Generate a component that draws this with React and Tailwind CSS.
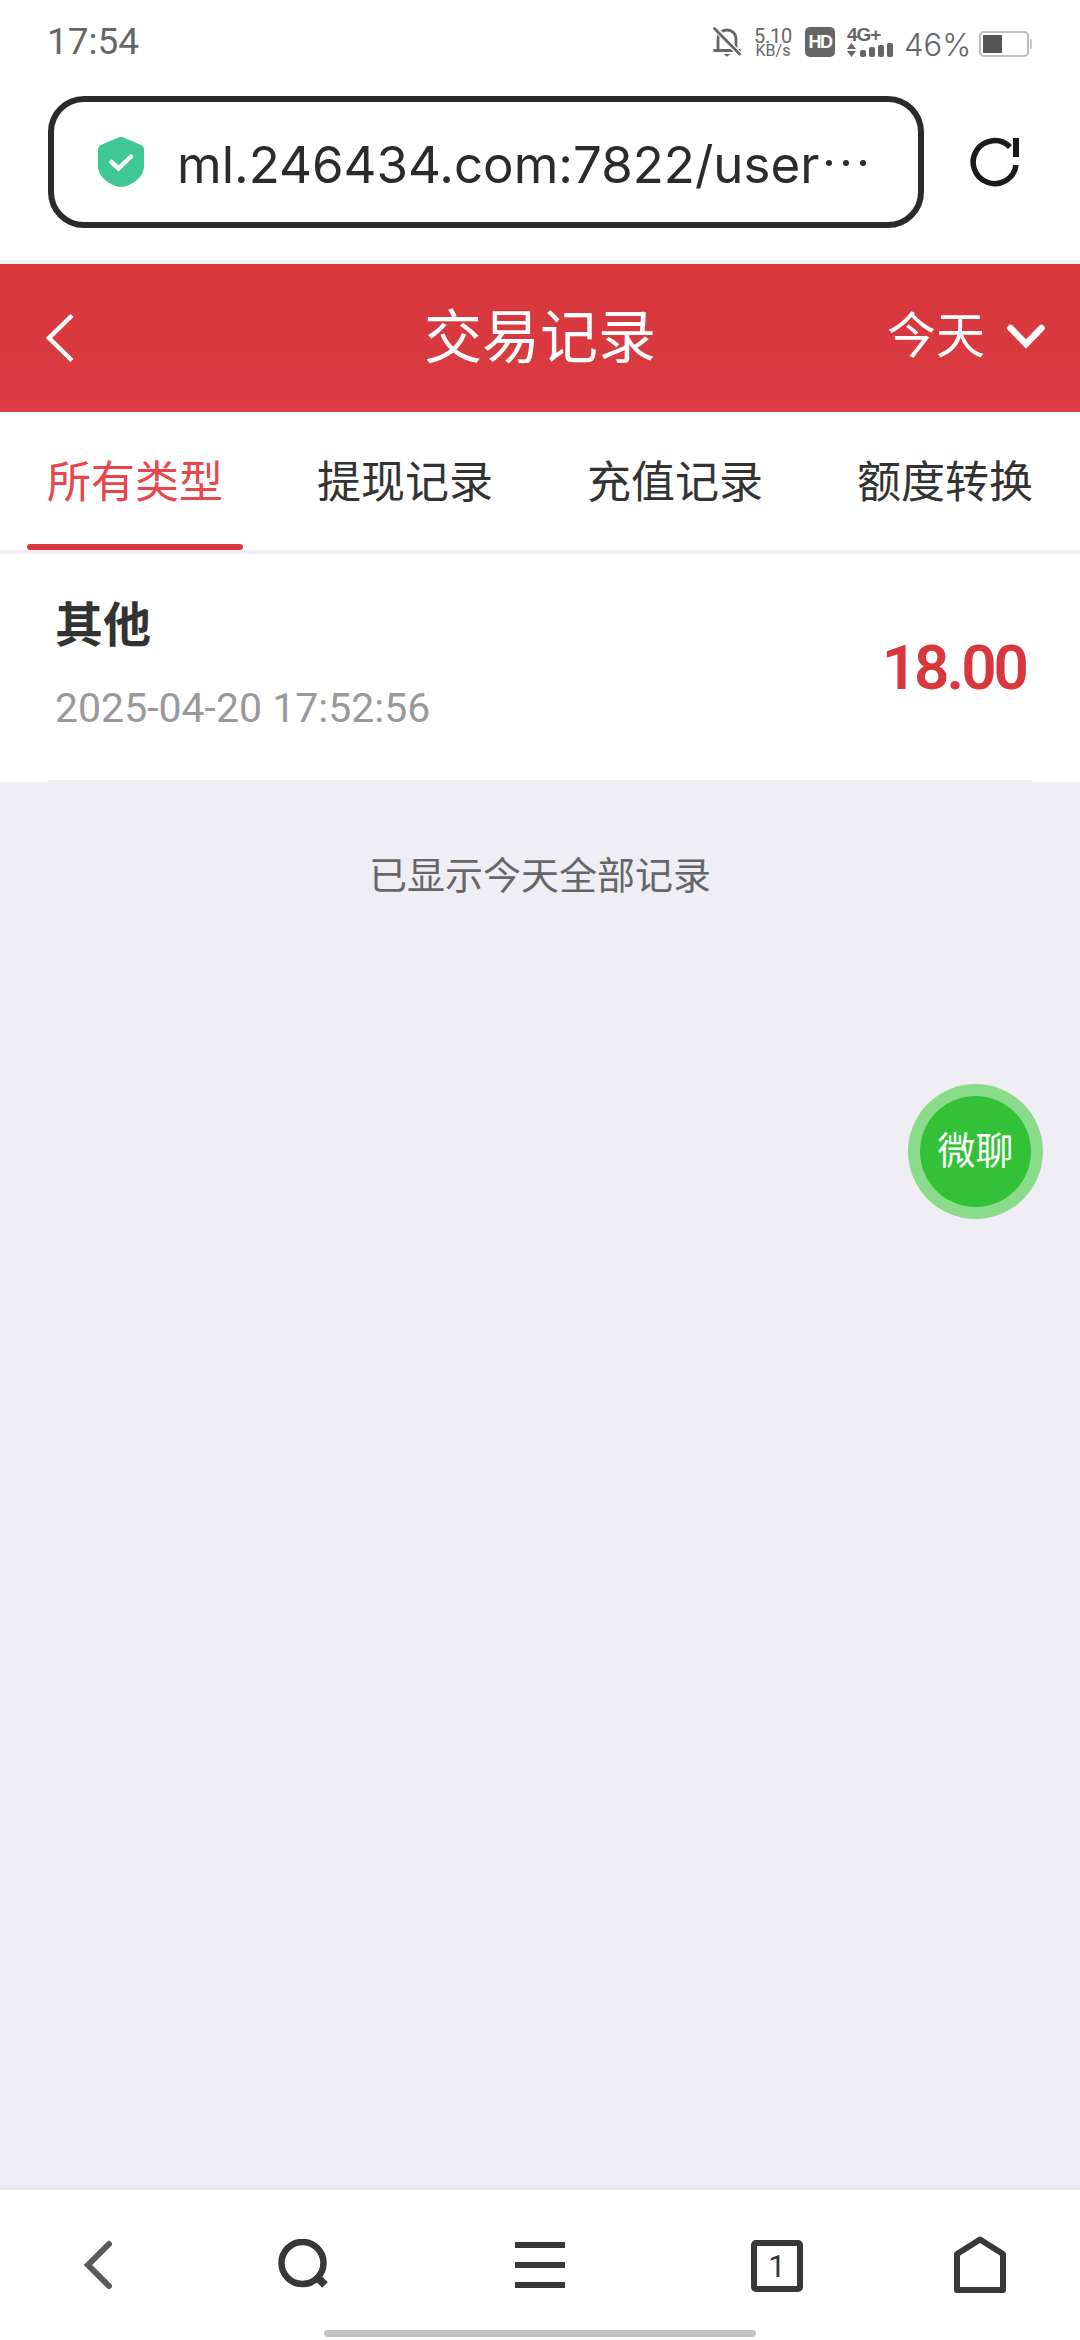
const sans = { fontFamily: '"Roboto","Noto Sans CJK SC",sans-serif' };
const inter = { fontFamily: '"Inter","Noto Sans CJK SC",sans-serif' };

function Bell() {
  return (
    <svg width="28" height="30" viewBox="0 0 28 30" fill="none" stroke="#666" strokeWidth="2.8">
      <path d="M5 22.500V12C5 6.500 9 3 14 3s9 3.500 9 9v10.500" />
      <path d="M1.500 23.500h25" strokeLinecap="round" />
      <path d="M10.500 27h7l-3.500 2.800z" fill="#666" stroke="none" />
      <path d="M2 1 27 28" stroke="#fff" strokeWidth="5.500" />
      <path d="M1.500 1.500 26.500 27" strokeLinecap="round" />
    </svg>
  );
}

function Signal() {
  return (
    <div className="flex flex-col w-[47px] h-[30px] text-[#666]">
      <span className="text-[19px] leading-[15px] font-bold tracking-[-1px] h-[16px]">4G+</span>
      <div className="flex items-end gap-[3px] h-[14px]">
        <svg width="9" height="14" viewBox="0 0 9 14" fill="#666" className="mr-[1px]">
          <path d="M4.500 0 9 6H0zM0 8h9l-4.500 6z" />
        </svg>
        <span className="w-[6px] h-[7px] rounded-[2px] bg-[#666]" />
        <span className="w-[6px] h-[10px] rounded-[2px] bg-[#666]" />
        <span className="w-[6px] h-[12px] rounded-[2px] bg-[#666]" />
        <span className="w-[6px] h-[14px] rounded-[2px] bg-[#666]" />
      </div>
    </div>
  );
}

function StatusBar() {
  return (
    <div className="h-[80px] flex items-start justify-between pl-[47px] pr-[48px] bg-white">
      <span className="mt-[23px] text-[37px] leading-none text-[#666]" style={sans}>17:54</span>
      <div className="flex items-start h-[30px] mt-[27px]">
        <Bell />
        <div className="flex flex-col items-center ml-[14px] w-[36px] text-[#666]" style={sans}>
          <span className="text-[20px] leading-[18px] tracking-[-0.3px]">5.10</span>
          <span className="text-[16px] leading-[12px]">KB/s</span>
        </div>
        <span className="ml-[14px] w-[30px] h-[30px] rounded-[5px] bg-[#666] text-white text-[18px] font-black flex items-center justify-center tracking-[-1.500px]">HD</span>
        <div className="ml-[12px]"><Signal /></div>
        <span className="ml-[10px] w-[63px] text-[31px] leading-[30px] text-[#666] font-light mt-[3px] whitespace-nowrap" style={inter}>46%</span>
        <div className="ml-[12px] flex items-center mt-[4px]">
          <div className="w-[50px] h-[26px] rounded-[5px] border-2 border-[#bdbdbd] p-[2px] bg-white">
            <div className="w-[19px] h-full bg-[#555]" />
          </div>
          <span className="ml-[1px] w-[2px] h-[10px] bg-[#ccc]" />
        </div>
      </div>
    </div>
  );
}

function Shield() {
  return (
    <svg width="46" height="50" viewBox="0 0 46 50">
      <path d="M23 0c2 0 3 .6 5 1.500L42 7.500c2.500 1 4 2.500 4 5V29c0 5-2 9-6 13-5 4.500-12 8-17 8s-12-3.500-17-8c-4-4-6-8-6-13V12.500c0-2.500 1.500-4 4-5L18 1.500C20 .6 21 0 23 0z" fill="#3fc795" />
      <path d="M13.500 25 20.500 31.500 33 19.500" fill="none" stroke="#fff" strokeWidth="4.500" strokeLinecap="round" />
    </svg>
  );
}

function Reload() {
  return (
    <svg width="49" height="50" viewBox="0 0 49 50" fill="none">
      <path d="M46 28A21.500 21.500 0 1 1 40 10" stroke="#1a1a1a" strokeWidth="5.500" />
      <path d="M49 1v19H43V1z" fill="#1a1a1a" />
    </svg>
  );
}

function UrlBar() {
  return (
    <div className="h-[180px] flex pl-[48px] pt-[16px] bg-white">
      <div className="w-[876px] h-[132px] rounded-[36px] border-[6px] border-[#2b2b2b] flex items-center pl-[44px]">
        <Shield />
        <span className="ml-[33px] mt-[4px] text-[51px] leading-none text-[#2b2b2b] whitespace-nowrap" style={inter}>ml.246434.com:7822/user</span>
        <span className="ml-[7px] flex gap-[11px] mt-[2px]">
          <span className="w-[6px] h-[6px] rounded-full bg-[#2b2b2b]" />
          <span className="w-[6px] h-[6px] rounded-full bg-[#2b2b2b]" />
          <span className="w-[6px] h-[6px] rounded-full bg-[#2b2b2b]" />
        </span>
      </div>
      <div className="ml-[46px] h-[132px] flex items-center"><Reload /></div>
    </div>
  );
}

function Header() {
  return (
    <div className="border-t-[4px] border-[#f2f2f2]">
      <div className="h-[148px] bg-linear-to-b from-[#d6373c] to-[#db3b42] relative flex items-center justify-center text-white">
        <svg className="absolute left-[45px] top-[50px]" width="30" height="48" viewBox="0 0 30 48" fill="none" stroke="#fff" strokeWidth="4.500">
          <path d="M27 1.500 4 24l23 22.500" />
        </svg>
        <span className="text-[58px] leading-none -mt-[1px]" style={sans}>交易记录</span>
        <div className="absolute right-[35px] top-[48px] flex items-center">
          <span className="text-[49px] leading-none" style={sans}>今天</span>
          <svg className="ml-[22px]" width="38" height="26" viewBox="0 0 38 26" fill="none" stroke="#fff" strokeWidth="6.500" strokeLinecap="round">
            <path d="M3.500 4 19 20 34.500 4" />
          </svg>
        </div>
      </div>
    </div>
  );
}

function Tabs() {
  const tabs = ['所有类型', '提现记录', '充值记录', '额度转换'];
  return (
    <div className="h-[142px] bg-white border-b-[4px] border-[#eeeef4] flex pl-[27px] pr-[27px] gap-[54px]" style={sans}>
      {tabs.map((t, i) => (
        <div key={t} className={`w-[216px] flex items-start justify-center pt-[41px] text-[44px] leading-[60px] relative ${i === 0 ? 'text-[#e9464b]' : 'text-[#333]'}`}>
          {t}
          {i === 0 && <span className="absolute left-0 right-0 bottom-0 h-[6px] rounded-full bg-[#d9373e]" />}
        </div>
      ))}
    </div>
  );
}

function Row() {
  return (
    <div className="bg-white h-[228px] px-[48px]" style={sans}>
      <div className="h-full border-b-[2px] border-[#ececef] flex items-start justify-between">
        <div className="pl-[7px] pt-[42px]">
          <div className="text-[48px] leading-[60px] font-bold text-[#333]">其他</div>
          <div className="mt-[30px] text-[41px] leading-[44px] text-[#999]">2025-04-20 17:52:56</div>
        </div>
        <span className="text-[62px] leading-[62px] font-semibold text-[#d9373e] mr-[6px] tracking-[-3px] mt-[83px]">18.00</span>
      </div>
    </div>
  );
}

function BottomBar() {
  const c = '#383838';
  return (
    <div className="h-[150px] bg-white shadow-[0_-2px_4px_rgba(0,0,0,0.05)] relative flex-none">
      <div className="flex h-[120px] items-start pt-[50px] justify-start pl-[83px]">
        <svg width="32" height="50" viewBox="0 0 32 50" fill="none" stroke="#5a5a5a" strokeWidth="6" strokeLinecap="round">
          <path d="M26 4 5 25l21 21" />
        </svg>
        <svg className="ml-[163px] -mt-[1px]" width="52" height="52" viewBox="0 0 52 52" fill="none" stroke={c}>
          <circle cx="24.500" cy="24" r="21" strokeWidth="6.500" />
          <path d="M38.500 37.500 47 46" strokeWidth="8" />
        </svg>
        <svg className="ml-[185px]" width="50" height="50" viewBox="0 0 50 50" fill={c}>
          <rect x="0" y="2" width="50" height="6" />
          <rect x="0" y="22" width="50" height="6" />
          <rect x="0" y="42" width="50" height="6" />
        </svg>
        <div className="ml-[186px] w-[52px] h-[52px] border-[6px] border-[#383838] rounded-[5px] flex items-center justify-center text-[31px] leading-none text-[#383838]" style={sans}>1</div>
        <svg className="ml-[151px] -mt-[4px]" width="52" height="58" viewBox="0 0 52 58" fill="none" stroke={c} strokeWidth="6" strokeLinejoin="round">
          <path d="M3 18 26 3.500 49 18V54H3z" />
        </svg>
      </div>
      <div className="absolute left-[324px] top-[140px] w-[432px] h-[7px] rounded-full bg-[#c2c2c2]" />
    </div>
  );
}

export default function App() {
  return (
    <div className="w-[1080px] h-[2340px] flex flex-col bg-[#eeeef4] overflow-hidden" style={{ fontFamily: '"Liberation Sans","Noto Sans CJK SC",sans-serif' }}>
      <StatusBar />
      <UrlBar />
      <Header />
      <Tabs />
      <Row />
      <div className="flex-1 relative">
        <p className="pt-[70px] text-center text-[38px] leading-[48px] text-[#666]" style={sans}>已显示今天全部记录</p>
        <div className="absolute left-[908px] top-[302px] w-[135px] h-[135px] rounded-full bg-[#8adc8a] flex items-center justify-center">
          <div className="w-[111px] h-[111px] rounded-full bg-[#33c237] flex items-center justify-center text-white text-[38px]" style={sans}>微聊</div>
        </div>
      </div>
      <BottomBar />
    </div>
  );
}
